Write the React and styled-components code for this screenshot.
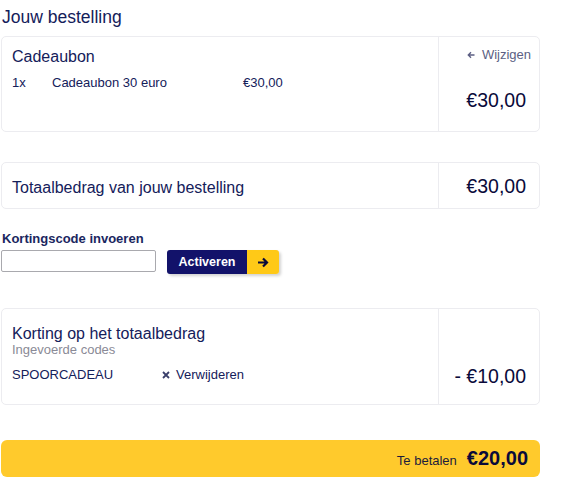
import React from 'react';
import styled, { createGlobalStyle } from 'styled-components';

const GlobalStyle = createGlobalStyle`
  body {
    margin: 0;
    background: #fff;
    font-family: "Liberation Sans", Arial, sans-serif;
    color: #0f1c4a;
  }
`;

const Page = styled.div`
  width: 539px;
  padding: 8px 0 0 1px;
`;

const Title = styled.h1`
  margin: 0 0 10px 1px;
  font-size: 17.5px;
  font-weight: normal;
  line-height: 18px;
  color: #14205a;
`;

const Card = styled.div`
  display: flex;
  border: 1px solid #ececf0;
  border-radius: 5px;
  min-height: ${p => p.$height}px;
  box-sizing: border-box;
  margin-bottom: ${p => p.$gap || 0}px;
`;

const Main = styled.div`
  flex: 1;
  padding: ${p => p.$pad || '10px 10px'};
  display: flex;
  flex-direction: column;
  justify-content: ${p => (p.$center ? 'center' : 'flex-start')};
`;

const Side = styled.div`
  width: 101px;
  box-sizing: border-box;
  border-left: 1px solid #ececf0;
  padding: 10px 13px 10px 0;
  display: flex;
  flex-direction: column;
  align-items: flex-end;
  justify-content: ${p => p.$align || 'space-between'};
`;

const CardHeading = styled.div`
  font-size: 16px;
  line-height: 18px;
  color: #14205a;
`;

const SubLabel = styled.div`
  font-size: 13px;
  line-height: 14px;
  color: #8a8a96;
`;

const ItemRow = styled.div`
  display: flex;
  font-size: 13px;
  line-height: 14px;
  color: #14205a;
  margin-top: ${p => p.$top || 0}px;
`;

const Cell = styled.span`
  width: ${p => p.$w}px;
  display: inline-flex;
  align-items: center;
  gap: 6px;
`;

const EditLink = styled.a`
  font-size: 13px;
  color: #5c5f84;
  display: inline-flex;
  align-items: center;
  gap: 7px;
  margin: 0 -5px 0 0;
`;

const Price = styled.div`
  font-size: 19.5px;
  line-height: 22px;
  color: #0a0a3a;
  margin-bottom: ${p => p.$bottom || 0}px;
`;

const CodeLabel = styled.label`
  display: block;
  font-size: 13px;
  font-weight: bold;
  color: #1a2660;
  margin: 0 0 4px 1px;
`;

const CodeRow = styled.div`
  display: flex;
  align-items: flex-start;
  gap: 11px;
  margin-bottom: 34px;
`;

const CodeInput = styled.input`
  width: 155px;
  height: 22px;
  box-sizing: border-box;
  border: 1px solid #a9a9ae;
  border-radius: 2px;
  margin: 0;
`;

const ActivateButton = styled.button`
  display: flex;
  height: 24px;
  padding: 0;
  border: none;
  border-radius: 3px;
  overflow: hidden;
  cursor: pointer;
  box-shadow: 2px 2px 3px rgba(0, 0, 0, 0.18);
  font-family: inherit;
`;

const ButtonText = styled.span`
  width: 80px;
  background: #12126a;
  color: #fff;
  font-size: 12.5px;
  font-weight: bold;
  display: flex;
  align-items: center;
  justify-content: center;
`;

const ButtonArrow = styled.span`
  width: 32px;
  background: #ffc917;
  display: flex;
  align-items: center;
  justify-content: center;
`;

const PayBar = styled.div`
  margin-top: 35px;
  height: 37px;
  background: #ffca2c;
  border-radius: 6px;
  display: flex;
  align-items: center;
  justify-content: flex-end;
  gap: 10px;
  padding-right: 12px;
`;

const PayLabel = styled.span`
  font-size: 13px;
  color: #1c1c3c;
  margin-top: 3px;
`;

const PayAmount = styled.span`
  font-size: 20px;
  font-weight: bold;
  color: #0a0a3a;
`;

const ArrowLeft = () => (
  <svg width="8" height="8" viewBox="0 0 8 8">
    <path d="M7.5 4H1.5M4 1.3L1.3 4L4 6.7" fill="none" stroke="#5c5f84" strokeWidth="1.4" />
  </svg>
);

const ArrowRight = () => (
  <svg width="12" height="11" viewBox="0 0 12 11">
    <path d="M1 5.5H10M6 1.5L10 5.5L6 9.5" fill="none" stroke="#0a0a3a" strokeWidth="2.2" />
  </svg>
);

const Cross = () => (
  <svg width="8" height="8" viewBox="0 0 8 8">
    <path d="M1 1L7 7M7 1L1 7" stroke="#3a3f6a" strokeWidth="1.8" />
  </svg>
);

export default function App() {
  return (
    <>
      <GlobalStyle />
      <Page>
        <Title>Jouw bestelling</Title>

        <Card $height={96} $gap={30}>
          <Main $pad="11px 10px">
            <CardHeading>Cadeaubon</CardHeading>
            <ItemRow $top={10}>
              <Cell $w={40}>1x</Cell>
              <Cell $w={191}>Cadeaubon 30 euro</Cell>
              <Cell $w={60}>€30,00</Cell>
            </ItemRow>
          </Main>
          <Side $align="space-between">
            <EditLink><ArrowLeft />Wijzigen</EditLink>
            <Price $bottom={10}>€30,00</Price>
          </Side>
        </Card>

        <Card $height={47} $gap={22}>
          <Main $center $pad="14px 10px 10px">
            <CardHeading>Totaalbedrag van jouw bestelling</CardHeading>
          </Main>
          <Side $align="center">
            <Price>€30,00</Price>
          </Side>
        </Card>

        <CodeLabel htmlFor="code">Kortingscode invoeren</CodeLabel>
        <CodeRow>
          <CodeInput id="code" type="text" />
          <ActivateButton type="button">
            <ButtonText>Activeren</ButtonText>
            <ButtonArrow><ArrowRight /></ButtonArrow>
          </ActivateButton>
        </CodeRow>

        <Card $height={97}>
          <Main $pad="16px 10px 10px">
            <CardHeading>Korting op het totaalbedrag</CardHeading>
            <SubLabel>Ingevoerde codes</SubLabel>
            <ItemRow $top={11}>
              <Cell $w={150}>SPOORCADEAU</Cell>
              <Cell $w={100}><Cross />Verwijderen</Cell>
            </ItemRow>
          </Main>
          <Side $align="flex-end">
            <Price $bottom={7}>- €10,00</Price>
          </Side>
        </Card>

        <PayBar>
          <PayLabel>Te betalen</PayLabel>
          <PayAmount>€20,00</PayAmount>
        </PayBar>
      </Page>
    </>
  );
}
